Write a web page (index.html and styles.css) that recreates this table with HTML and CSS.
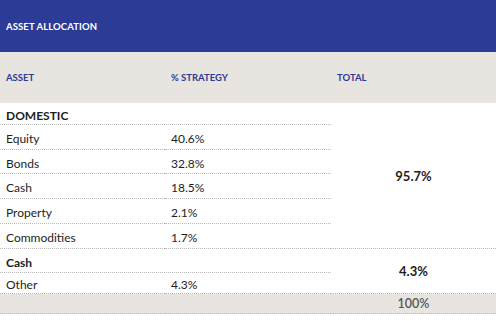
FILE: index.html
```html
<!DOCTYPE html>
<html>
<head>
<meta charset="utf-8">
<link rel="stylesheet" href="styles.css">
</head>
<body>
<div class="alloc">
  <div class="title">ASSET ALLOCATION</div>
  <div class="head">ASSET</div>
  <div class="head">% STRATEGY</div>
  <div class="head">TOTAL</div>

  <div class="cell group wide">DOMESTIC</div>
  <div class="total dom">95.7%</div>
  <div class="cell">Equity</div><div class="cell">40.6%</div>
  <div class="cell">Bonds</div><div class="cell">32.8%</div>
  <div class="cell">Cash</div><div class="cell">18.5%</div>
  <div class="cell">Property</div><div class="cell">2.1%</div>
  <div class="cell">Commodities</div><div class="cell">1.7%</div>

  <div class="cell group wide">Cash</div>
  <div class="total other">4.3%</div>
  <div class="cell">Other</div><div class="cell">4.3%</div>

  <div class="foot"></div><div class="foot"></div><div class="foot grand">100%</div>
</div>
</body>
</html>
```
FILE: styles.css
```css
html, body {
  margin: 0;
  padding: 0;
  background: #ffffff;
}
body {
  font-family: Lato, "Open Sans", Arial, sans-serif;
  color: #1e1e1e;
}
.alloc {
  width: 496px;
  display: grid;
  grid-template-columns: 165px 166px 165px;
  grid-template-rows: 52px 51px 22px 25px 24px 25px 25px 25px 24px 21px 20px;
}
.alloc > div {
  box-sizing: border-box;
  display: flex;
  align-items: center;
  padding-left: 6px;
}
.title {
  grid-column: 1 / 4;
  background: #2c3b96;
  color: #ffffff;
  font-size: 9.5px;
  font-weight: 700;
  letter-spacing: 0.1px;
}
.head {
  background: #e8e5e0;
  color: #2c3b96;
  font-size: 9.5px;
  font-weight: 700;
}
.cell {
  font-size: 12px;
  border-bottom: 1px dotted #b9b9b9;
  padding-top: 3px;
}
.wide {
  grid-column: 1 / 3;
}
.group {
  font-weight: 700;
}
.alloc > .total {
  grid-column: 3;
  justify-content: center;
  padding-left: 0;
  font-weight: 700;
  font-size: 13px;
  border-bottom: 1px dotted #b9b9b9;
}
.dom {
  grid-row: 3 / 9;
}
.other {
  grid-row: 9 / 11;
}
.foot {
  background: #e8e5e0;
  border-bottom: 1px dotted #b9b9b9;
}
.alloc > .grand {
  justify-content: center;
  padding-left: 0;
  color: #555555;
  font-weight: 600;
  font-size: 12.5px;
}
```
